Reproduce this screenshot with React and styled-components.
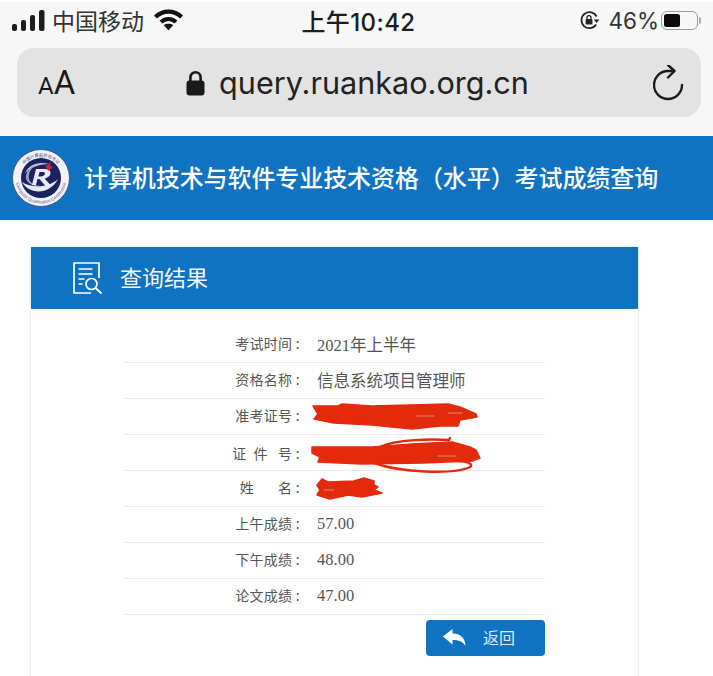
import React from "react";
import styled, { createGlobalStyle } from "styled-components";

const CJK = '"Noto Sans CJK SC", sans-serif';

const GlobalStyle = createGlobalStyle`
  html, body {
    margin: 0;
    padding: 0;
    background: #fff;
    overflow: hidden;
  }
  body {
    font-family: Inter, ${CJK};
  }
`;

const rows = [
  { label: "考试时间 :", value: "2021年上半年" },
  { label: "资格名称 :", value: "信息系统项目管理师" },
  { label: "准考证号 :", scribble: "number" },
  { label: "证  件   号 :", scribble: "id" },
  { label: "姓       名 :", scribble: "name" },
  { label: "上午成绩 :", value: "57.00" },
  { label: "下午成绩 :", value: "48.00" },
  { label: "论文成绩 :", value: "47.00" },
];

const SignalIcon = () => (
  <svg width="33" height="21" viewBox="0 0 33 21">
    <rect x="0" y="14" width="5" height="7" rx="2" fill="#1c1c1c" />
    <rect x="9" y="10" width="5" height="11" rx="2" fill="#1c1c1c" />
    <rect x="18" y="5" width="5" height="16" rx="2" fill="#1c1c1c" />
    <rect x="27" y="0" width="5.5" height="21" rx="2" fill="#1c1c1c" />
  </svg>
);

const WifiIcon = () => (
  <svg width="29" height="22" viewBox="0 0 29 22" fill="none" stroke="#111" strokeWidth="4.2">
    <path d="M1.500 8C9 .8 20 .8 27.500 8" />
    <path d="M7 13C11.500 9.200 17.500 9.200 22 13" />
    <path d="M14.500 21.500l-4.800-5.400c2.800-1.800 6.800-1.800 9.600 0z" fill="#111" stroke="none" />
  </svg>
);

const RotationLockIcon = () => (
  <svg width="21" height="21" viewBox="0 0 21 21" fill="none">
    <path d="M17.200 14.500A8 8 0 1 1 17.600 6.500" stroke="#222" strokeWidth="1.700" />
    <path d="M14.800 9.500h5.600l-2.800 3.600z" fill="#222" />
    <rect x="6.600" y="9" width="6.800" height="5.600" rx="1" fill="#222" />
    <path d="M8 9.500V7.600a2 2 0 0 1 4 0v1.900" stroke="#222" strokeWidth="1.300" />
  </svg>
);

const LockIcon = () => (
  <svg width="19" height="26" viewBox="0 0 19 26" fill="none">
    <path d="M4.400 12V7.400a5.100 5.100 0 0 1 10.200 0V12" stroke="#1a1a1a" strokeWidth="2.600" />
    <rect x="0.500" y="10.500" width="18" height="15" rx="3" fill="#1a1a1a" />
  </svg>
);

const ReloadIcon = () => (
  <svg width="31" height="36" viewBox="0 0 31 36" fill="none" stroke="#1c1c1c" strokeWidth="2.400" strokeLinecap="round" strokeLinejoin="round">
    <path d="M21 6H15A14 14 0 1 0 29 20" />
    <path d="M15 0l6.500 6-6.500 6.500" />
  </svg>
);

const Logo = () => (
  <svg width="58" height="58" viewBox="0 0 58 58">
    <defs>
      <path id="ringTop" d="M7.500 29a21.500 21.500 0 0 1 43 0" />
      <path id="ringBottom" d="M3.500 29a25.500 25.500 0 0 0 51 0" />
    </defs>
    <circle cx="29" cy="29" r="28.500" fill="#f1f2f6" stroke="#3d3f78" strokeWidth="0.800" />
    <text fontSize="4.200" fill="#4b4d80" fontFamily={CJK} textAnchor="middle">
      <textPath href="#ringTop" startOffset="50%">中国计算机资格考试</textPath>
    </text>
    <text fontSize="4.400" fill="#5a5c8c" fontFamily="Liberation Sans, sans-serif" textAnchor="middle">
      <textPath href="#ringBottom" startOffset="50%">Computer Qualification Certification</textPath>
    </text>
    <circle cx="29" cy="29" r="20" fill="#1d2160" />
    <path d="M10 33c7 13 28 13 36-3-8 8-25 10-36 3z" fill="#e6e8f1" />
    <path d="M13 24c4-9 14-12 24-9-9 0-18 3-24 9z" fill="#c6c9dc" />
    <path d="M14 30c-1-7 4-12 10-14-5 3-8 8-7 14 1 4 6 7 12 7-6 1-13-2-15-7z" fill="#9a9ebf" />
    <path d="M24 20l-4 16h4l1.500-6h2l6 7h6l-7-7.500c3.500-.6 6-2.900 6-5.700 0-2.600-2.200-3.800-5.500-3.800zm3.500 3h3c1.800 0 2.500.6 2.500 1.600 0 1.700-1.800 2.900-4 2.900h-2.600z" fill="#e8e9f2" fillRule="evenodd" />
    <path d="M33 18l6-5-1 4 3 1-5 4-1-3z" fill="#d8242c" />
  </svg>
);

const ReportIcon = () => (
  <svg width="30" height="32" viewBox="0 0 30 32" fill="none" stroke="#fff" strokeWidth="1.700">
    <path d="M26 16V1H1v30h17" strokeLinejoin="round" />
    <path d="M5.500 7h14M5.500 12h14M5.500 17h6M5.500 22h4" />
    <circle cx="18.500" cy="22" r="5.500" />
    <path d="M22.500 26l5.500 5" strokeLinecap="round" />
  </svg>
);

const BackIcon = () => (
  <svg width="23" height="17" viewBox="0 0 23 17">
    <path d="M0 7.500L9.500 0v4.600c8 0 12.500 4.400 13 12.400-2.400-4.400-6.500-6-13-6v4.400z" fill="#fff" />
  </svg>
);

const scribbles = {
  number: {
    width: 166,
    height: 30,
    body: "M1 5L26 5 30 3 60 5 136 3 148 6 164 13 165 16 148 19 146 25 128 25 100 28 60 24 22 22 2 18 6 13z",
    slits: ["M104 15h18", "M136 12h14"],
  },
  id: {
    width: 168,
    height: 38,
    body: "M0 12L60 12 100 9 140 7 158 12 164 15 168 23 160 26 110 28 50 29 6 27 8 22 0 18z",
    slits: ["M126 21h18"],
    loops: ["M68 12C84 4 120 4 137 5L138 3", "M62 28C90 38 140 39 156 33 164 30 156 26 146 26"],
  },
  name: {
    width: 72,
    height: 34,
    body: "M5 14L10 8 16 11 42 10 52 7 62 10 62 14 66 16 62 19 70 22 50 26 36 24 18 28 5 24 8 19z",
    slits: ["M12 19h10"],
  },
};

const Scribble = ({ type }) => {
  const { width, height, body, slits, loops = [] } = scribbles[type];
  return (
    <Styled.ScribbleSvg width={width} height={height} viewBox={`0 0 ${width} ${height}`} fill="none" strokeLinecap="round">
      <path d={body} fill="#e32a0c" stroke="#e32a0c" strokeWidth="1.500" strokeLinejoin="round" />
      {loops.map((d) => (
        <path key={d} d={d} stroke="#e32a0c" strokeWidth="2.400" />
      ))}
      {slits.map((d) => (
        <path key={d} d={d} stroke="#f0a08c" strokeWidth="0.800" />
      ))}
    </Styled.ScribbleSvg>
  );
};

export default function App() {
  return (
    <Styled.Page>
      <GlobalStyle />
      <Styled.Chrome>
        <Styled.StatusBar>
          <Styled.StatusSide>
            <SignalIcon />
            <Styled.Carrier>中国移动</Styled.Carrier>
            <WifiIcon />
          </Styled.StatusSide>
          <Styled.Clock>上午10:42</Styled.Clock>
          <Styled.StatusRight>
            <RotationLockIcon />
            <Styled.Percent>46%</Styled.Percent>
            <Styled.Battery>
              <Styled.BatteryFill />
            </Styled.Battery>
            <Styled.BatteryCap />
          </Styled.StatusRight>
        </Styled.StatusBar>
        <Styled.AddressBar>
          <Styled.TextSize>
            <small>A</small>A
          </Styled.TextSize>
          <Styled.Url>
            <LockIcon />
            <span>query.ruankao.org.cn</span>
          </Styled.Url>
          <ReloadIcon />
        </Styled.AddressBar>
      </Styled.Chrome>
      <Styled.SiteHeader>
        <Logo />
        <Styled.SiteTitle>计算机技术与软件专业技术资格（水平）考试成绩查询</Styled.SiteTitle>
      </Styled.SiteHeader>
      <Styled.Card>
        <Styled.CardHeader>
          <ReportIcon />
          <Styled.CardTitle>查询结果</Styled.CardTitle>
        </Styled.CardHeader>
        <Styled.Results>
          {rows.map((row) => (
            <Styled.Row key={row.label}>
              <Styled.Label>{row.label}</Styled.Label>
              <Styled.Value>
                {row.scribble ? <Scribble type={row.scribble} /> : row.value}
              </Styled.Value>
            </Styled.Row>
          ))}
          <Styled.BackButton>
            <BackIcon />
            <span>返回</span>
          </Styled.BackButton>
        </Styled.Results>
      </Styled.Card>
    </Styled.Page>
  );
}

const Styled = {
  Page: styled.div`
    width: 713px;
    height: 676px;
    overflow: hidden;
    background: #fff;
  `,
  Chrome: styled.div`
    height: 134px;
    margin-top: 2px;
    padding: 0 12px 0 17px;
    background: #f7f7f7;
  `,
  StatusBar: styled.div`
    display: grid;
    grid-template-columns: 1fr auto 1fr;
    align-items: center;
    height: 40px;
    padding-bottom: 4px;
    box-sizing: border-box;
    margin-left: -5px;
    color: #1c1c1c;
  `,
  StatusSide: styled.div`
    display: flex;
    align-items: center;
    gap: 7px;
  `,
  Carrier: styled.span`
    margin-right: 3px;
    font-family: ${CJK};
    font-size: 23px;
    color: #333;
  `,
  Clock: styled.span`
    font-size: 24px;
    font-weight: 500;
    font-family: Inter, ${CJK};
    letter-spacing: 0.400px;
    margin-left: 4px;
  `,
  StatusRight: styled.div`
    display: flex;
    align-items: center;
    justify-content: flex-end;
    gap: 8px;
  `,
  Percent: styled.span`
    font-size: 22.500px;
    color: #333;
    margin-right: -6px;
  `,
  Battery: styled.div`
    width: 37px;
    height: 19px;
    padding: 2px;
    box-sizing: border-box;
    border: 1.500px solid #9b9b9b;
    border-radius: 6px;
  `,
  BatteryFill: styled.div`
    width: 16px;
    height: 100%;
    border-radius: 2.500px;
    background: #0a0a0a;
  `,
  BatteryCap: styled.div`
    width: 2px;
    height: 7px;
    margin-left: -7px;
    border-radius: 0 2px 2px 0;
    background: #aaa;
  `,
  AddressBar: styled.div`
    display: flex;
    align-items: center;
    justify-content: space-between;
    box-sizing: border-box;
    width: 684px;
    height: 69px;
    margin-top: 6px;
    padding: 0 17px 0 21px;
    border-radius: 17px;
    background: #e3e3e3;
    color: #1a1a1a;
  `,
  TextSize: styled.div`
    width: 37px;
    font-size: 33px;
    font-family: Roboto, sans-serif;
    white-space: nowrap;
    small {
      font-size: 24px;
    }
  `,
  Url: styled.div`
    display: flex;
    align-items: center;
    gap: 14px;
    margin-right: 13px;
    font-family: Inter, sans-serif;
    font-size: 30.600px;
    color: #222;
  `,
  SiteHeader: styled.div`
    display: flex;
    align-items: center;
    gap: 14px;
    height: 84px;
    padding-left: 12px;
    background: #0f73c2;
  `,
  SiteTitle: styled.h1`
    margin: 0 0 4px;
    font-family: ${CJK};
    font-size: 24px;
    font-weight: 500;
    letter-spacing: -0.080px;
    color: #fff;
  `,
  Card: styled.div`
    width: 607px;
    margin: 27px 0 0 31px;
    box-shadow: 0 0 2px #cfcfcf;
  `,
  CardHeader: styled.div`
    display: flex;
    align-items: center;
    gap: 17px;
    height: 62px;
    padding-left: 42px;
    background: #0f73c2;
  `,
  CardTitle: styled.span`
    padding-bottom: 4px;
    font-family: ${CJK};
    font-size: 22px;
    color: #f4f8fc;
  `,
  Results: styled.div`
    display: flex;
    flex-direction: column;
    width: 421px;
    height: 420px;
    margin-left: 93px;
    padding-top: 18px;
  `,
  Row: styled.div`
    display: grid;
    grid-template-columns: 176px 1fr;
    align-items: center;
    gap: 17px;
    height: 35px;
    border-bottom: 1px solid #e8e8e8;
    margin: 0;
  `,
  Label: styled.span`
    padding-bottom: 3px;
    font-family: ${CJK};
    font-size: 14px;
    color: #555;
    text-align: right;
    white-space: pre;
    letter-spacing: 0.300px;
  `,
  Value: styled.span`
    display: flex;
    align-items: center;
    padding-bottom: 1px;
    font-family: "Liberation Serif", ${CJK};
    font-size: 16.500px;
    color: #555;
  `,
  ScribbleSvg: styled.svg`
    margin-left: -5px;
    overflow: visible;
  `,
  BackButton: styled.button`
    display: flex;
    align-items: center;
    gap: 17px;
    align-self: flex-end;
    width: 119px;
    height: 36px;
    margin-top: 5px;
    padding: 0 0 2px 17px;
    border: 0;
    border-radius: 4px;
    background: #0f73c2;
    font-family: ${CJK};
    font-size: 16px;
    color: #dbe9f5;
  `,
};
